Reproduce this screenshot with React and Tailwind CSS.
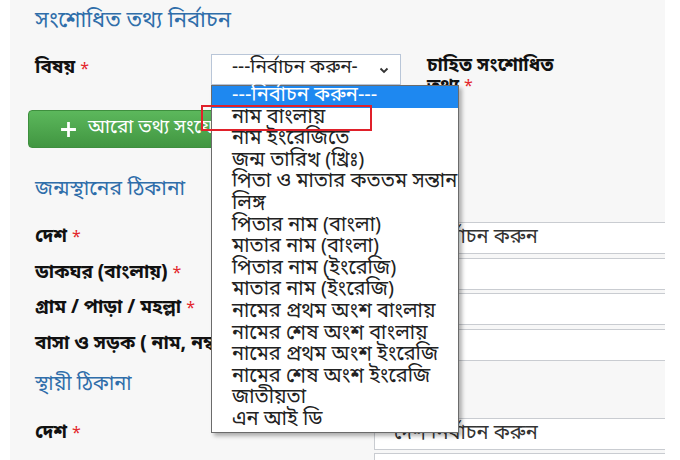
import React from "react";

const items = [
  "নাম বাংলায়",
  "নাম ইংরেজিতে",
  "জন্ম তারিখ (খ্রিঃ)",
  "পিতা ও মাতার কততম সন্তান",
  "লিঙ্গ",
  "পিতার নাম (বাংলা)",
  "মাতার নাম (বাংলা)",
  "পিতার নাম (ইংরেজি)",
  "মাতার নাম (ইংরেজি)",
  "নামের প্রথম অংশ বাংলায়",
  "নামের শেষ অংশ বাংলায়",
  "নামের প্রথম অংশ ইংরেজি",
  "নামের শেষ অংশ ইংরেজি",
  "জাতীয়তা",
  "এন আই ডি",
];

function Star() {
  return <span className="text-[#e3262b] font-normal text-[16px] ml-[5px] align-top">*</span>;
}

function Row({ label, value }) {
  return (
    <div className="flex items-center h-[32px] mb-[3.5px]">
      <div className="w-[339px] shrink-0 text-[19px] leading-[24px] font-bold text-[#111] whitespace-nowrap">
        {label}
        {label ? <Star /> : null}
      </div>
      <div className="w-[300px] shrink-0 h-[32px] bg-white border border-[#c9ccd1] flex items-center pl-[19px] text-[20px] text-[#333] whitespace-nowrap">
        {value}
      </div>
    </div>
  );
}

export default function App() {
  return (
    <div className="w-[680px] h-[460px] bg-white overflow-hidden relative font-['Noto_Sans_Bengali','Noto_Sans',sans-serif]">
      <div className="ml-[10px] w-[655px] h-[460px] bg-[#f7f7f7] overflow-hidden pl-[25px] pt-[12px]">
        <div className="h-[20px] leading-[20px] text-[22px] text-[#2f6eaa] whitespace-nowrap">সংশোধিত তথ্য নির্বাচন</div>

        <div className="flex items-start mt-[22px] h-[31px]">
          <div className="w-[176px] shrink-0 h-[31px] flex items-center text-[19px] font-bold text-[#111]">
            বিষয়
            <Star />
          </div>
          <div className="w-[190px] shrink-0 h-[31px] bg-white border border-[#b9c6d8] flex items-center pl-[20px] pr-[8px] text-[19px] text-[#222]">
            <span className="flex-1 whitespace-nowrap">---নির্বাচন করুন-</span>
            <svg width="12" height="12" viewBox="0 0 12 12" className="mr-[2px] shrink-0">
              <path d="M2.5 4.5 L6 8 L9.5 4.5" fill="none" stroke="#333" strokeWidth="1.8" />
            </svg>
          </div>
          <div className="ml-[26px] mt-[2px] text-[19px] font-bold text-[#111] leading-[21px] whitespace-nowrap">
            <div>চাহিত সংশোধিত</div>
            <div>
              তথ্য
              <Star />
            </div>
          </div>
        </div>

        <div className="mt-[25px] ml-[-7px] w-[240px] h-[38px] rounded-[4px] border border-[#3e8f3e] bg-gradient-to-b from-[#5cb85c] to-[#419641] flex items-center pl-[31px] text-white text-[19px] whitespace-nowrap">
          <svg width="17" height="17" viewBox="0 0 16 16" className="mr-[11px] shrink-0">
            <path d="M8 1 V15 M1 8 H15" stroke="#fff" strokeWidth="2.6" />
          </svg>
          <span>আরো তথ্য সংযোজন</span>
        </div>

        <div className="mt-[32px] h-[20px] leading-[20px] text-[21px] text-[#2f6eaa] whitespace-nowrap">জন্মস্থানের ঠিকানা</div>

        <div className="mt-[22px]">
          <Row label="দেশ" value="দেশ নির্বাচন করুন" />
          <Row label="ডাকঘর (বাংলায়)" value="" />
          <Row label="গ্রাম / পাড়া / মহল্লা" value="" />
          <Row label="বাসা ও সড়ক ( নাম, নম্বর )" value="" />
        </div>

        <div className="mt-[14px] h-[20px] leading-[20px] text-[20px] text-[#2f6eaa] whitespace-nowrap">স্থায়ী ঠিকানা</div>

        <div className="mt-[23px]">
          <Row label="দেশ" value="দেশ নির্বাচন করুন" />
          <Row label="" value="" />
        </div>
      </div>

      <div className="absolute left-[211px] top-[85px] w-[248px] bg-white border border-[#6b6b6b] shadow-[3px_3px_4px_rgba(0,0,0,0.3)] text-[20px] text-[#222]">
        <div className="h-[21.6px] leading-[21.6px] pl-[20px] bg-[#1e88f0] text-white whitespace-nowrap">---নির্বাচন করুন---</div>
        {items.map((t) => (
          <div key={t} className="h-[21.6px] leading-[21.6px] pl-[20px] whitespace-nowrap">
            {t}
          </div>
        ))}
      </div>

      <div className="absolute left-[201px] top-[105px] w-[171px] h-[26px] border-2 border-[#e0202a]" />
    </div>
  );
}
